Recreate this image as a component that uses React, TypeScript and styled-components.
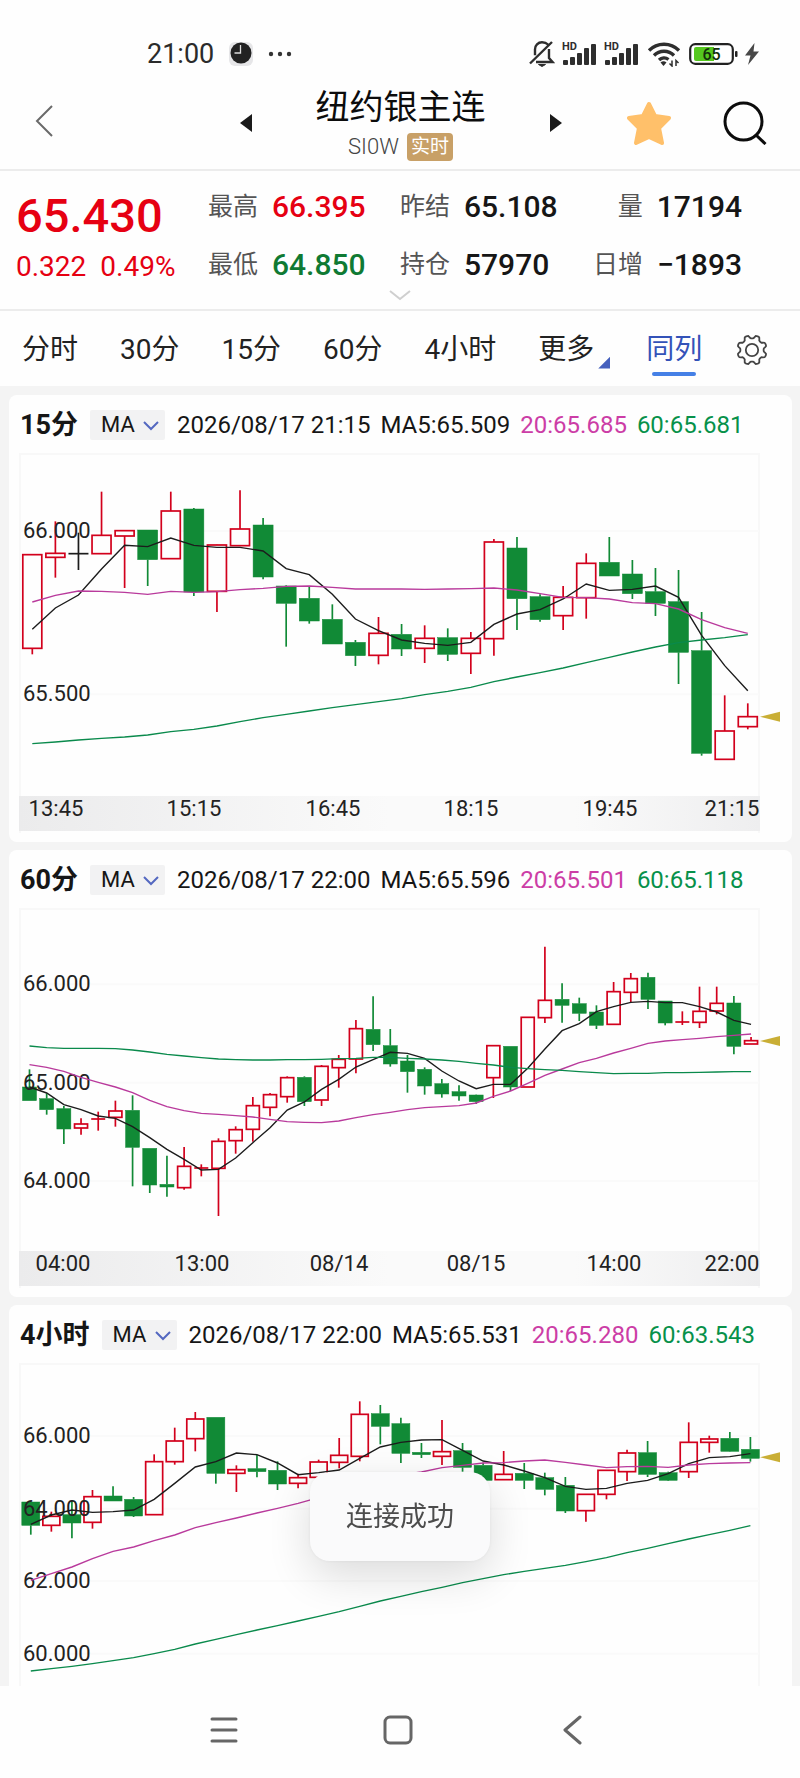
import React from "react";
import styled, { createGlobalStyle } from "styled-components";

const GlobalStyle = createGlobalStyle`
  * { box-sizing: border-box; }
  html, body { margin: 0; padding: 0; background: #fefefe; }
  body, button, select {
    font-family: Roboto, "Noto Sans CJK SC", "Liberation Sans", sans-serif;
    color: #161616;
  }
  button { margin: 0; padding: 0; border: 0; background: none; cursor: pointer; }
  svg { display: block; flex: none; }
`;

const RED = "#e60012";
const GREEN = "#0f7a33";

/* ---------- shell ---------- */

const Screen = styled.div`
  display: flex;
  flex-direction: column;
  height: 100vh;
  overflow: hidden;
  background: #fefefe;
`;

const StatusBar = styled.div`
  display: flex;
  align-items: center;
  justify-content: space-between;
  height: 84px;
  padding: 24px 41px 0 147px;
  flex: none;
`;

const StatusGroup = styled.div<{ $gap: number }>`
  display: flex;
  align-items: center;
  gap: ${(p) => p.$gap}px;
`;

const Clock = styled.span`
  font-size: 27px;
  line-height: 32px;
  color: #2b2b2b;
`;

const Header = styled.header`
  display: grid;
  grid-template-columns: 1fr 322px 1fr;
  align-items: center;
  height: 87px;
  padding: 0 33px 8px 34px;
  border-bottom: 2px solid #ececec;
  flex: none;
`;

const HeaderMiddle = styled.div`
  display: flex;
  align-items: center;
  justify-content: space-between;
`;

const HeaderActions = styled.div`
  display: flex;
  align-items: center;
  justify-content: flex-end;
  gap: 52px;
`;

const TitleBlock = styled.div`
  display: flex;
  flex-direction: column;
  align-items: center;
  gap: 6px;
  padding-top: 2px;
`;

const Title = styled.h1`
  margin: 0;
  font-size: 34px;
  line-height: 40px;
  font-weight: 400;
  color: #0c0c0c;
`;

const SubTitle = styled.div`
  display: flex;
  align-items: center;
  gap: 8px;
  font-size: 22px;
  line-height: 28px;
  font-weight: 300;
  color: #444;
`;

const LiveBadge = styled.span`
  padding: 0 4px;
  border-radius: 4px;
  background: #c8a067;
  color: #fff;
  font-size: 19px;
  font-weight: 400;
`;

/* ---------- quote ---------- */

const Quote = styled.section`
  display: grid;
  grid-template-columns: 192px 1fr;
  padding: 18px 58px 8px 16px;
  border-bottom: 2px solid #ececec;
  flex: none;
`;

const Last = styled.div`
  display: flex;
  flex-direction: column;
  gap: 10px;
  color: ${RED};
`;

const LastPrice = styled.div`
  font-size: 47px;
  line-height: 54px;
  font-weight: 500;
`;

const LastChange = styled.div`
  display: flex;
  gap: 14px;
  font-size: 28px;
  line-height: 28px;
`;

const Stats = styled.dl`
  display: grid;
  grid-template-columns: 192px 1fr auto;
  row-gap: 22px;
  margin: 0;
`;

const Stat = styled.div<{ $end?: boolean }>`
  display: flex;
  align-items: center;
  justify-content: ${(p) => (p.$end ? "flex-end" : "flex-start")};
  gap: 14px;
`;

const StatName = styled.dt`
  font-size: 25px;
  line-height: 36px;
  color: #555;
`;

const StatValue = styled.dd<{ $color?: string }>`
  margin: 0;
  font-size: 30px;
  line-height: 36px;
  font-weight: 500;
  color: ${(p) => p.$color || "#161616"};
`;

const Expand = styled.button`
  grid-column: 1 / -1;
  display: flex;
  justify-content: center;
  height: 18px;
  margin-right: -42px;
  padding-top: 7px;
`;

/* ---------- period tabs ---------- */

const Tabs = styled.nav`
  display: flex;
  align-items: center;
  gap: 42px;
  height: 75px;
  padding: 2px 33px 0 22px;
  flex: none;
`;

const Tab = styled.button<{ $active?: boolean; $menu?: boolean }>`
  position: relative;
  padding-right: ${(p) => (p.$menu ? 10 : 0)}px;
  font-size: 28px;
  line-height: 40px;
  white-space: nowrap;
  color: ${(p) => (p.$active ? "#3352b8" : "#222")};

  &::after {
    content: "";
    position: absolute;
    display: ${(p) => (p.$active || p.$menu ? "block" : "none")};
    ${(p) =>
      p.$menu
        ? `right: -6px; bottom: 1px; width: 12px; height: 12px;
           background: #4560bd; clip-path: polygon(100% 0, 100% 100%, 0 100%);`
        : `left: 6px; right: 6px; bottom: -6px; height: 4px;
           border-radius: 2px; background: #4580e6;`}
  }
`;

const SettingsButton = styled.button`
  margin-left: -8px;
`;

/* ---------- charts ---------- */

const Charts = styled.main`
  display: flex;
  flex-direction: column;
  gap: 8px;
  flex: 1;
  min-height: 0;
  padding: 9px 8px 0 9px;
  overflow: hidden;
  background: #f4f4f4;
`;

const Card = styled.section`
  flex: none;
  padding-bottom: 9px;
  border-radius: 8px;
  background: #fefefe;
`;

const CardHeader = styled.div`
  display: flex;
  align-items: center;
  gap: 12px;
  height: 58px;
  padding: 2px 11px 0;
  white-space: nowrap;
`;

const CardTitle = styled.h2`
  margin: 0;
  font-size: 27px;
  line-height: 32px;
  font-weight: 700;
`;

const Picker = styled.label`
  position: relative;
  display: flex;

  svg {
    position: absolute;
    right: 6px;
    top: 10px;
    pointer-events: none;
  }
`;

const PickerSelect = styled.select`
  appearance: none;
  width: 75px;
  height: 30px;
  margin: 0;
  padding: 0 0 0 11px;
  border: 0;
  border-radius: 2px;
  background: #f2f2f3;
  font-size: 22px;
  line-height: 30px;
`;

const Readout = styled.div`
  display: flex;
  gap: 10px;
  font-size: 24px;
  line-height: 30px;
`;

const Reading = styled.span<{ $color?: string }>`
  color: ${(p) => p.$color || "#161616"};
`;

const ChartSvg = styled.svg`
  width: 100%;
  height: auto;
  overflow: hidden;

  text {
    font-family: Roboto, "Liberation Sans", sans-serif;
    font-size: 22px;
    fill: #222;
  }
`;

/* ---------- toast + system navigation ---------- */

const Toast = styled.div`
  position: fixed;
  left: 50%;
  bottom: 217px;
  transform: translateX(-50%);
  padding: 25px 36px 24px;
  border-radius: 20px;
  background: #fafafb;
  box-shadow: 0 14px 44px rgba(0, 0, 0, 0.14), 0 0 4px rgba(0, 0, 0, 0.06);
  font-size: 27px;
  line-height: 40px;
  white-space: nowrap;
  color: #4c4c4c;
`;

const SystemNav = styled.nav`
  display: flex;
  align-items: center;
  justify-content: center;
  gap: 114px;
  height: 92px;
  padding: 0 4px 5px 0;
  background: #fefefe;
  flex: none;
`;

const NavButton = styled.button`
  display: flex;
  justify-content: center;
  width: 60px;
`;

/* ---------- chart data ---------- */

// kind, high, body top, body bottom, low (thirds of a pixel)
type Candle = ["r" | "g" | "k", number, number, number, number];

interface ChartData {
  title: string;
  time: string;
  ma: [string, string, string];
  origin: number;
  first: number;
  step: number;
  body: number;
  candles: Candle[];
  lines: [number[], number[], number[]];
  levels: [number, string][];
  ticks: [number, string][];
  last: number;
}

const chart15: ChartData = {
  title: "15分",
  time: "2026/08/17 21:15",
  ma: ["MA5:65.509", "20:65.685", "60:65.681"],
  origin: 219,
  first: 23.3,
  step: 23.08,
  body: 20,
  candles: [
    ["r", 524, 524, 805, 823], ["r", 424, 520, 532, 593], ["k", 458, 521, 521, 570],
    ["r", 335, 466, 521, 521], ["r", 452, 452, 468, 624], ["g", 450, 450, 539, 618],
    ["r", 335, 393, 536, 536], ["g", 384, 387, 636, 648], ["r", 494, 495, 634, 696],
    ["r", 331, 447, 497, 497], ["g", 414, 435, 591, 598], ["g", 616, 618, 670, 800],
    ["g", 619, 655, 723, 731], ["g", 673, 718, 792, 792], ["g", 780, 787, 827, 858],
    ["r", 711, 760, 826, 853], ["g", 732, 763, 807, 828], ["r", 736, 775, 805, 849],
    ["g", 745, 773, 823, 843], ["r", 756, 775, 820, 882], ["r", 477, 486, 776, 827],
    ["g", 471, 504, 656, 750], ["g", 643, 650, 719, 725], ["r", 618, 652, 707, 750],
    ["r", 520, 550, 653, 716], ["g", 471, 547, 588, 588], ["g", 540, 582, 641, 657],
    ["g", 564, 635, 670, 708], ["g", 570, 665, 817, 912], ["g", 696, 812, 1120, 1127],
    ["r", 946, 1053, 1138, 1138], ["r", 970, 1010, 1040, 1048],
  ],
  lines: [
    [748, 684, 645, 567, 496, 500, 474, 496, 502, 502, 513, 566, 584, 643, 717, 752, 780, 790, 796, 787, 733, 702, 689, 657, 612, 631, 628, 618, 652, 766, 857, 932],
    [666, 646, 633, 634, 637, 643, 634, 637, 635, 629, 625, 619, 618, 622, 627, 627, 627, 628, 627, 626, 624, 630, 641, 652, 653, 657, 668, 671, 687, 719, 743, 760],
    [1091, 1086, 1080, 1075, 1071, 1065, 1055, 1048, 1038, 1025, 1013, 1003, 993, 983, 974, 965, 956, 944, 934, 922, 905, 891, 878, 864, 848, 832, 816, 801, 788, 780, 773, 764],
  ],
  levels: [[453, "66.000"], [943, "65.500"]],
  ticks: [[47, "13:45"], [185, "15:15"], [324, "16:45"], [462, "18:15"], [601, "19:45"], [723, "21:15"]],
  last: 1010,
};

const chart60: ChartData = {
  title: "60分",
  time: "2026/08/17 22:00",
  ma: ["MA5:65.596", "20:65.501", "60:65.118"],
  origin: 201,
  first: 20.5,
  step: 17.18,
  body: 14,
  candles: [
    ["g", 685, 738, 779, 779], ["g", 757, 773, 806, 821], ["g", 795, 803, 864, 909],
    ["r", 832, 849, 861, 881], ["r", 812, 834, 834, 869], ["r", 779, 810, 829, 857],
    ["g", 763, 808, 919, 1036], ["g", 922, 922, 1032, 1056], ["g", 944, 1030, 1038, 1067],
    ["r", 918, 976, 1040, 1046], ["r", 970, 981, 981, 1006], ["r", 892, 901, 982, 1125],
    ["r", 856, 866, 899, 938], ["r", 768, 794, 865, 902], ["r", 756, 761, 799, 826],
    ["r", 706, 710, 767, 785], ["g", 706, 709, 782, 795], ["r", 672, 676, 777, 795],
    ["r", 642, 655, 680, 740], ["r", 537, 563, 654, 697], ["g", 466, 565, 611, 630],
    ["g", 564, 614, 669, 677], ["g", 642, 660, 692, 755], ["g", 679, 685, 735, 761],
    ["g", 714, 728, 759, 770], ["g", 733, 752, 765, 779], ["g", 761, 762, 782, 789],
    ["r", 614, 614, 710, 771], ["g", 616, 616, 738, 750], ["r", 529, 529, 738, 738],
    ["r", 317, 478, 530, 546], ["g", 427, 475, 493, 545], ["g", 470, 488, 517, 540],
    ["g", 493, 513, 553, 564], ["r", 423, 452, 550, 550], ["r", 396, 413, 454, 484],
    ["g", 395, 409, 475, 504], ["g", 480, 480, 546, 553], ["r", 511, 543, 543, 552],
    ["r", 437, 511, 544, 561], ["r", 437, 487, 510, 520], ["g", 465, 486, 616, 640],
    ["r", 588, 599, 609, 609],
  ],
  lines: [
    [738, 756, 791, 806, 825, 832, 857, 890, 925, 955, 987, 985, 951, 905, 860, 807, 783, 745, 715, 678, 656, 634, 637, 652, 690, 720, 743, 730, 730, 682, 624, 569, 548, 512, 497, 484, 481, 485, 485, 497, 513, 538, 550],
    [671, 679, 691, 709, 724, 738, 755, 778, 797, 809, 817, 820, 824, 828, 835, 842, 844, 845, 840, 830, 821, 814, 806, 800, 797, 794, 786, 766, 750, 727, 703, 684, 665, 652, 636, 622, 607, 600, 596, 592, 587, 583, 579],
    [615, 620, 622, 622, 622, 623, 627, 633, 640, 645, 650, 654, 656, 657, 657, 656, 656, 655, 653, 652, 649, 649, 652, 654, 657, 661, 667, 672, 679, 683, 686, 688, 692, 695, 698, 697, 697, 695, 695, 694, 693, 692, 692],
  ],
  levels: [[430, "66.000"], [725, "65.000"], [1020, "64.000"]],
  ticks: [[54, "04:00"], [193, "13:00"], [330, "08/14"], [467, "08/15"], [605, "14:00"], [723, "22:00"]],
  last: 600,
};

const chart240: ChartData = {
  title: "4小时",
  time: "2026/08/17 22:00",
  ma: ["MA5:65.531", "20:65.280", "60:63.543"],
  origin: 216,
  first: 21.8,
  step: 20.56,
  body: 18,
  candles: [
    ["g", 633, 633, 703, 731], ["r", 662, 676, 703, 722], ["g", 630, 671, 696, 742],
    ["r", 597, 617, 694, 713], ["g", 586, 615, 630, 630], ["g", 618, 625, 675, 678],
    ["r", 490, 512, 671, 671], ["r", 410, 450, 512, 521], ["r", 363, 384, 443, 481],
    ["g", 379, 379, 547, 578], ["r", 523, 536, 547, 603], ["g", 492, 533, 542, 559],
    ["g", 511, 538, 579, 597], ["r", 548, 560, 577, 592], ["r", 506, 513, 559, 559],
    ["r", 441, 493, 514, 532], ["r", 331, 370, 496, 511], ["g", 342, 368, 406, 460],
    ["g", 380, 398, 487, 516], ["g", 456, 484, 491, 501], ["r", 387, 482, 496, 522],
    ["g", 456, 479, 529, 542], ["g", 515, 523, 568, 568], ["r", 480, 550, 566, 566],
    ["g", 516, 547, 568, 594], ["g", 545, 560, 595, 613], ["g", 558, 583, 660, 666],
    ["r", 610, 610, 659, 692], ["r", 538, 538, 610, 625], ["r", 476, 486, 542, 570],
    ["g", 450, 485, 550, 558], ["g", 542, 545, 568, 570], ["r", 394, 454, 542, 561],
    ["r", 434, 444, 454, 485], ["g", 423, 442, 481, 482], ["g", 438, 475, 502, 512],
  ],
  lines: [
    [700, 672, 657, 664, 662, 657, 625, 577, 528, 512, 486, 491, 516, 551, 545, 537, 502, 468, 454, 447, 446, 478, 510, 522, 540, 560, 586, 595, 592, 577, 568, 548, 518, 500, 497, 488],
    [868, 848, 828, 803, 781, 768, 749, 732, 710, 695, 681, 666, 652, 637, 620, 604, 588, 570, 552, 543, 530, 523, 516, 515, 510, 507, 514, 522, 530, 527, 526, 529, 522, 518, 516, 515],
    [1140, 1133, 1126, 1118, 1109, 1100, 1088, 1075, 1059, 1045, 1031, 1017, 1004, 990, 976, 962, 946, 930, 916, 902, 889, 875, 863, 851, 841, 832, 823, 812, 800, 785, 772, 758, 744, 731, 718, 704],
  ],
  levels: [[435, "66.000"], [653, "64.000"], [870, "62.000"], [1088, "60.000"]],
  ticks: [],
  last: 499,
};

const INK = { r: "#d2001c", g: "#118a36", k: "#1c1c1c" };
const LINE_COLORS = ["#1c1c1c", "#b93a9c", "#0a8a4c"];

function Candlesticks({ data }: { data: ChartData }) {
  const y = (v: number) => (v - data.origin) / 3;
  const x = (i: number) => data.first + i * data.step;
  return (
    <ChartSvg viewBox="0 0 783 380" role="img" aria-label={`${data.title} K线`}>
      <defs>
        <linearGradient id="axisFade" x1="0" x2="1" y1="0" y2="0">
          <stop offset="0" stopColor="#ebebec" />
          <stop offset="0.5" stopColor="#fafafa" />
          <stop offset="0.75" stopColor="#fafafa" />
          <stop offset="1" stopColor="#eeeeef" />
        </linearGradient>
      </defs>
      <rect x="11" y="1" width="739" height="400" fill="none" stroke="#f8f8f8" strokeWidth="2" />
      {data.levels.map(([v]) => (
        <line key={v} x1="11" x2="750" y1={y(v)} y2={y(v)} stroke="#fafafa" strokeWidth="2" />
      ))}
      <rect x="10" y="343" width="741" height="35" fill="url(#axisFade)" />
      {data.candles.map(([kind, high, top, bottom, low], i) => {
        const flat = bottom - top < 5;
        const ink = INK[kind];
        const left = x(i) - data.body / 2;
        return (
          <g key={i} stroke={ink} strokeWidth="1.7">
            {high < top && <line x1={x(i)} x2={x(i)} y1={y(high)} y2={y(top)} />}
            {low > bottom && <line x1={x(i)} x2={x(i)} y1={y(bottom)} y2={y(low)} />}
            {flat ? (
              <line x1={left} x2={left + data.body} y1={y(top)} y2={y(top)} />
            ) : (
              <rect
                x={kind === "g" ? left : left + 0.5}
                y={y(top)}
                width={kind === "g" ? data.body : data.body - 1}
                height={(bottom - top) / 3}
                fill={kind === "g" ? ink : "#fefefe"}
                strokeWidth={kind === "g" ? 0.5 : 1.7}
              />
            )}
          </g>
        );
      })}
      {data.levels.map(([v, label]) => (
        <text key={label} x="14" y={Math.round(y(v)) + 7}>{label}</text>
      ))}
      {data.lines.map((line, n) => (
        <polyline
          key={n}
          fill="none"
          stroke={LINE_COLORS[n]}
          strokeWidth="1.4"
          points={line.map((v, i) => `${x(i)},${y(v)}`).join(" ")}
        />
      ))}
      {data.ticks.map(([tx, label]) => (
        <text key={label} x={tx} y="363" textAnchor="middle">{label}</text>
      ))}
      <path d={`M751 ${y(data.last)} l20 -5 v10 z`} fill="#c9ae35" />
    </ChartSvg>
  );
}

function ChartCard({ data }: { data: ChartData }) {
  return (
    <Card>
      <CardHeader>
        <CardTitle>{data.title}</CardTitle>
        <Picker>
          <PickerSelect aria-label={`${data.title} 指标`} defaultValue="MA">
            <option>MA</option>
          </PickerSelect>
          <svg width="16" height="11" viewBox="0 0 16 11" fill="none" stroke="#5468c0" strokeWidth="2">
            <path d="M1 2l7 7 7-7" />
          </svg>
        </Picker>
        <Readout>
          <Reading>{data.time}</Reading>
          <Reading>{data.ma[0]}</Reading>
          <Reading $color="#cc3da6">{data.ma[1]}</Reading>
          <Reading $color="#07914a">{data.ma[2]}</Reading>
        </Readout>
      </CardHeader>
      <Candlesticks data={data} />
    </Card>
  );
}

/* ---------- icons ---------- */

function SignalIcon() {
  return (
    <svg width="35" height="36" viewBox="1 -5 35 36" fill="#2e2e2e">
      <text x="1" y="9" fontSize="11" fontWeight="700" fontFamily="Roboto, sans-serif">HD</text>
      <rect x="2" y="19" width="5" height="5" rx="1" />
      <rect x="9" y="16" width="5" height="8" rx="1" />
      <rect x="16" y="12" width="5" height="12" rx="1" />
      <rect x="23" y="7" width="5" height="17" rx="1" />
      <rect x="30" y="3" width="5" height="21" rx="1" />
    </svg>
  );
}

// Eight-lobed outline of the settings cog
const cogPath =
  Array.from({ length: 96 }, (_, i) => {
    const a = (i / 96) * Math.PI * 2;
    const r = 13.2 + 1.6 * Math.tanh(2.2 * Math.cos(8 * a + Math.PI));
    return `${i ? "L" : "M"}${(16 + r * Math.cos(a)).toFixed(2)} ${(16 + r * Math.sin(a)).toFixed(2)}`;
  }).join("") + "Z";

const TABS = ["分时", "30分", "15分", "60分", "4小时", "更多", "同列"];

export default function App() {
  return (
    <Screen>
      <GlobalStyle />
      <StatusBar>
        <StatusGroup $gap={14}>
          <Clock>21:00</Clock>
          <svg width="26" height="26" viewBox="0 0 26 26">
            <rect x="1" y="1" width="24" height="24" rx="6" fill="#e6e6e8" />
            <circle cx="13" cy="12" r="10.500" fill="#222" />
            <path d="M12.500 4v8H6.500" fill="none" stroke="#ddd" strokeWidth="1.3" />
          </svg>
          <svg width="24" height="6" viewBox="0 0 24 6" fill="#333">
            <circle cx="3" cy="3" r="2.2" />
            <circle cx="12" cy="3" r="2.2" />
            <circle cx="21" cy="3" r="2.2" />
          </svg>
        </StatusGroup>
        <StatusGroup $gap={7}>
          <svg width="26" height="28" viewBox="0 0 26 28" fill="none" stroke="#2e2e2e" strokeWidth="2.4">
            <path d="M19 4.500C17.500 3 15.500 2.300 13 2.300c-4 0-7 3-7 7v6M20 9v9l3.500 4H7M1 23.500L23 2" />
            <path d="M9.500 24.500h7l-3.500 2z" fill="#2e2e2e" strokeWidth="1" />
          </svg>
          <SignalIcon />
          <SignalIcon />
          <svg width="36" height="26" viewBox="0 0 36 26" fill="none" stroke="#2e2e2e" strokeWidth="3.4">
            <path d="M3 9.500a21 21 0 0 1 30 0M8 14.500a14 14 0 0 1 20 0M13 19a7.500 7.500 0 0 1 9.500-.5" />
            <path d="M14.500 21.500a4.500 4.500 0 0 1 6 0l-3 3.500z" fill="#2e2e2e" stroke="none" />
            <path d="M26 19.500v5.500l-2.500-2.500M30 25v-5.500l2.500 2.500" strokeWidth="1.5" />
          </svg>
          <svg width="49" height="24" viewBox="0 0 49 24">
            <rect x="1.200" y="2.200" width="42.600" height="19.600" rx="5" fill="#fff" stroke="#222" strokeWidth="2.200" />
            <path d="M7 5h18v14H7a2 2 0 0 1-2-2V7a2 2 0 0 1 2-2z" fill="#55c81e" />
            <rect x="46" y="9" width="2.500" height="6" rx="1" fill="#222" />
            <text x="22.500" y="18" fontSize="16" fontWeight="500" fontFamily="Roboto, sans-serif" textAnchor="middle" fill="#12300a">65</text>
          </svg>
          <svg width="14" height="22" viewBox="0 0 14 22" fill="#484848">
            <path d="M9.500 0L0 12.500h5.500L3 22 14 8.500H8.500z" />
          </svg>
        </StatusGroup>
      </StatusBar>

      <Header>
        <div>
          <button aria-label="返回">
            <svg width="20" height="34" viewBox="0 0 20 34" fill="none" stroke="#6a6a6a" strokeWidth="2">
              <path d="M18 2L3 17l15 15" />
            </svg>
          </button>
        </div>
        <HeaderMiddle>
          <button aria-label="上一个">
            <svg width="12" height="18" viewBox="0 0 12 18" fill="#1a1a1a">
              <path d="M12 0v18L0 9z" />
            </svg>
          </button>
          <TitleBlock>
            <Title>纽约银主连</Title>
            <SubTitle>
              SI0W <LiveBadge>实时</LiveBadge>
            </SubTitle>
          </TitleBlock>
          <button aria-label="下一个">
            <svg width="12" height="18" viewBox="0 0 12 18" fill="#1a1a1a">
              <path d="M0 0l12 9-12 9z" />
            </svg>
          </button>
        </HeaderMiddle>
        <HeaderActions>
          <button aria-label="自选">
            <svg width="44" height="44" viewBox="0 0 44 44" fill="#ffc06a" stroke="#ffc06a" strokeWidth="4" strokeLinejoin="round">
              <path d="M22 3l6 12 14 2-10 10 3 15-13-6-13 6 3-15L2 17l14-2z" />
            </svg>
          </button>
          <button aria-label="搜索">
            <svg width="44" height="44" viewBox="0 0 44 44" fill="none" stroke="#0c0c0c" strokeWidth="3">
              <circle cx="20.500" cy="20.500" r="18.500" />
              <path d="M33 34l9.500 9" />
            </svg>
          </button>
        </HeaderActions>
      </Header>

      <Quote>
        <Last>
          <LastPrice>65.430</LastPrice>
          <LastChange>
            <span>0.322</span>
            <span>0.49%</span>
          </LastChange>
        </Last>
        <Stats>
          <Stat><StatName>最高</StatName><StatValue $color={RED}>66.395</StatValue></Stat>
          <Stat><StatName>昨结</StatName><StatValue>65.108</StatValue></Stat>
          <Stat $end><StatName>量</StatName><StatValue>17194</StatValue></Stat>
          <Stat><StatName>最低</StatName><StatValue $color={GREEN}>64.850</StatValue></Stat>
          <Stat><StatName>持仓</StatName><StatValue>57970</StatValue></Stat>
          <Stat $end><StatName>日增</StatName><StatValue>−1893</StatValue></Stat>
        </Stats>
        <Expand aria-label="展开">
          <svg width="22" height="11" viewBox="0 0 22 11" fill="none" stroke="#cfcfcf" strokeWidth="2">
            <path d="M1 1l10 8 10-8" />
          </svg>
        </Expand>
      </Quote>

      <Tabs>
        {TABS.map((name) => (
          <Tab key={name} $active={name === "同列"} $menu={name === "更多"}>{name}</Tab>
        ))}
        <SettingsButton aria-label="设置">
          <svg width="32" height="32" viewBox="0 0 32 32" fill="none" stroke="#444" strokeWidth="1.8">
            <path d={cogPath} />
            <circle cx="16" cy="16" r="6.200" />
          </svg>
        </SettingsButton>
      </Tabs>

      <Charts>
        <ChartCard data={chart15} />
        <ChartCard data={chart60} />
        <ChartCard data={chart240} />
      </Charts>

      <Toast role="status">连接成功</Toast>

      <SystemNav>
        <NavButton aria-label="最近任务">
          <svg width="28" height="28" viewBox="0 0 28 28" fill="none" stroke="#666" strokeWidth="3" strokeLinecap="round">
            <path d="M2 3h24M2 14h24M2 25h24" />
          </svg>
        </NavButton>
        <NavButton aria-label="主屏幕">
          <svg width="30" height="30" viewBox="0 0 30 30" fill="none" stroke="#666" strokeWidth="3">
            <rect x="2" y="2" width="26" height="26" rx="5" />
          </svg>
        </NavButton>
        <NavButton aria-label="后退">
          <svg width="20" height="30" viewBox="0 0 20 30" fill="none" stroke="#666" strokeWidth="3" strokeLinecap="round" strokeLinejoin="round">
            <path d="M18 2L3 15l15 13" />
          </svg>
        </NavButton>
      </SystemNav>
    </Screen>
  );
}
